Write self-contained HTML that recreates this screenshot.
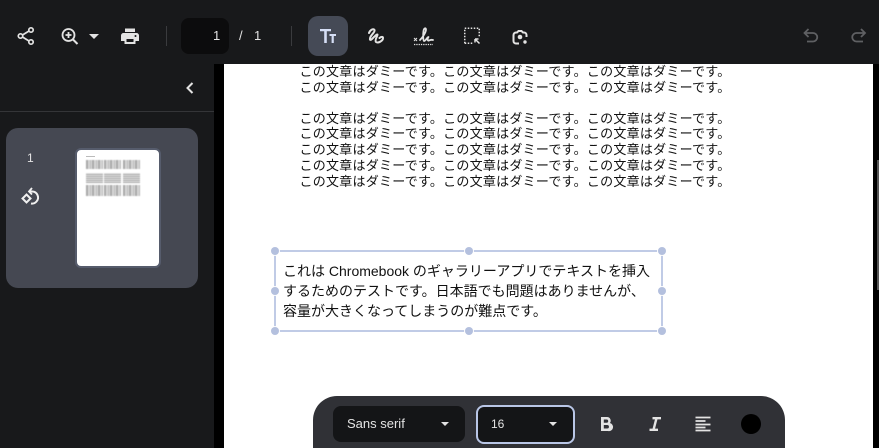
<!DOCTYPE html>
<html><head><meta charset="utf-8"><style>
html,body{margin:0;padding:0;width:879px;height:448px;overflow:hidden;background:#000;font-family:"Liberation Sans","Noto Sans CJK JP",sans-serif}
body{position:relative}
.a{position:absolute}
svg{position:absolute;overflow:visible}
.l{position:absolute;left:299.500px;font:13px/16px "Liberation Sans","Noto Sans CJK JP",sans-serif;letter-spacing:.25px;color:#111;white-space:nowrap;height:16px;filter:blur(.3px)}
.h{position:absolute;width:8px;height:8px;border-radius:50%;background:#b4c0de;box-shadow:0 0 0 1px #fff}
.b{position:absolute;background:#c0cbe6}
.c{position:absolute;width:17px;background-color:#c4c4c4;filter:blur(.4px)}
.v{background-image:repeating-linear-gradient(90deg,#a8a8a8 0 2px,#d8d8d8 2px 4px,#b8b8b8 4px 5px,#e0e0e0 5px 6px)}
.z{background-image:repeating-linear-gradient(0deg,#a8a8a8 0 1px,#e4e4e4 1px 2px)}
</style></head><body>
<div class="a" style="left:0;top:0;width:879px;height:64px;background:#18191b"></div>
<div class="a" style="left:0;top:64px;width:214px;height:384px;background:#18191b"></div>
<div class="a" style="left:0;top:111px;width:214px;height:1px;background:#343538"></div>
<div class="a" style="left:224px;top:64px;width:649px;height:384px;background:#fff"></div>
<div class="a" style="left:877px;top:160px;width:2px;height:130px;background:#555"></div>

<!-- share -->
<svg style="left:14px;top:24px" width="24" height="24" viewBox="0 0 24 24" fill="none" stroke="#e3e3e3" stroke-width="1.7"><circle cx="17" cy="6" r="2.2"/><circle cx="6.5" cy="12" r="2.2"/><circle cx="17" cy="18" r="2.2"/><path d="M8.500 11 15 7M8.500 13 15 17"/></svg>
<!-- zoom -->
<svg style="left:58px;top:24px" width="24" height="24" viewBox="0 0 24 24" fill="none" stroke="#e3e3e3" stroke-width="1.8"><circle cx="10.500" cy="11" r="6"/><path d="M15 15.500 19.500 20" stroke-width="2"/><path d="M10.500 8v6M7.500 11h6"/></svg>
<div class="a" style="left:89px;top:34px;width:0;height:0;border:5px solid transparent;border-top-color:#e3e3e3;border-bottom:0"></div>
<!-- print -->
<svg style="left:118px;top:24px" width="24" height="24" viewBox="0 0 24 24" fill="#e3e3e3"><path d="M7 4.500h10v3.500H7zM5.500 9h13A2.500 2.500 0 0 1 21 11.500V17h-3.500v3h-11v-3H3v-5.500A2.500 2.500 0 0 1 5.500 9zM8.500 15v3h7v-3zM17.500 11a1 1 0 1 0 .01 0z" fill-rule="evenodd"/></svg>

<div class="a" style="left:166px;top:26px;width:1px;height:20px;background:#3a3b3e"></div>
<div class="a" style="left:181px;top:18px;width:48px;height:36px;border-radius:8px;background:#0c0c0d"></div>
<div class="a" style="left:213px;top:28px;font-size:13px;line-height:16px;color:#e3e3e3">1</div>
<div class="a" style="left:239px;top:28px;font-size:13px;line-height:16px;color:#e3e3e3">/</div>
<div class="a" style="left:254px;top:28px;font-size:13px;line-height:16px;color:#e3e3e3">1</div>
<div class="a" style="left:291px;top:26px;width:1px;height:20px;background:#3a3b3e"></div>

<div class="a" style="left:308px;top:16px;width:40px;height:40px;border-radius:10px;background:#454a56"></div>
<!-- Tt -->
<svg style="left:316px;top:24px" width="24" height="24" viewBox="0 0 24 24" fill="#d5def5"><path d="M4 5h11v2.200h-4.200V19H8.200V7.200H4zM13.500 10h6.500v2h-2.200v7h-2.200v-7h-2.100z"/></svg>
<!-- scribble -->
<svg style="left:364px;top:24px" width="24" height="24" viewBox="0 0 24 24" fill="none" stroke="#e3e3e3" stroke-width="2" stroke-linecap="round" stroke-linejoin="round"><path d="M5 9C6 6 9.500 4 10.500 6 11.500 8.500 5 12 6 15.500 7 17.500 10.500 11.500 13 10.500 15 10 10 16 12 18 14 19.500 19 17 19 14 19 12.500 17 12.500 15.500 14"/></svg>
<!-- signature -->
<svg style="left:412px;top:24px" width="24" height="24" viewBox="0 0 24 24" fill="none" stroke="#e3e3e3"><path d="M2 14 5 17M5 14 2 17" stroke-width="1"/><path d="M8 16C11 13 14 8 14 5.500 14 3.500 12 4 11.500 7 11 10 11 16 12 17 13.500 17.500 15 13 16.500 13 15 15 15.500 17 17 16.500 18 16 19.500 15.500 21 16" stroke-width="1.800" stroke-linecap="round" stroke-linejoin="round"/><path d="M2 20.500H21" stroke-width="1.300" stroke-dasharray="1.300 1"/></svg>
<!-- selection -->
<svg style="left:460px;top:24px" width="24" height="24" viewBox="0 0 24 24" fill="none" stroke="#e3e3e3" stroke-width="1.500"><path d="M4.750 19.250v-15h14.500v8M4.750 19.250H12.500" stroke-dasharray="1.500 1.500"/><path d="M15 15 19.500 19.500M15 15h3.500M15 15v3.500" stroke-width="1.500"/></svg>
<!-- camera -->
<svg style="left:508px;top:24px" width="24" height="24" viewBox="0 0 24 24" fill="none" stroke="#e3e3e3" stroke-width="2"><path d="M11 19.500H8a2.500 2.500 0 0 1-2.500-2.500v-6A2.500 2.500 0 0 1 8 8.500h1L10.500 7h3L15 8.500h1a2.500 2.500 0 0 1 2.500 2.500v2"/><circle cx="12" cy="13" r="2.300" fill="#e3e3e3" stroke="none"/><circle cx="17" cy="18" r="1.700" fill="#e3e3e3" stroke="none"/></svg>
<!-- undo redo -->
<svg style="left:799px;top:24px" width="24" height="24" viewBox="0 0 24 24" fill="none" stroke="#5f6063" stroke-width="1.800"><path d="M9.500 5 5.500 9l4 4M5.500 9H14a4.200 4.200 0 0 1 0 8.500H8"/></svg>
<svg style="left:846px;top:24px" width="24" height="24" viewBox="0 0 24 24" fill="none" stroke="#5f6063" stroke-width="1.800"><path d="M15 5l4 4-4 4M19 9h-8.500a4.200 4.200 0 0 0 0 8.500H17"/></svg>

<!-- chevron -->
<svg style="left:178px;top:76px" width="24" height="24" viewBox="0 0 24 24" fill="none" stroke="#e3e3e3" stroke-width="2"><path d="M14.500 7 9.500 12l5 5"/></svg>

<!-- thumb panel -->
<div class="a" style="left:6px;top:128px;width:192px;height:160px;border-radius:12px;background:#454852"></div>
<div class="a" style="left:27px;top:150px;font-size:12px;line-height:16px;color:#e3e3e3">1</div>
<svg style="left:18px;top:185px" width="24" height="24" viewBox="0 0 24 24" fill="none" stroke="#f0f0f0" stroke-width="2"><path d="M8.500 9.500 12.500 13.500 8.500 17.500 4.500 13.500z"/><path d="M12 6.500h2a6 6 0 0 1 4.500 10 6 6 0 0 1-5.500 2"/><path d="M14 3 11 6.500 14 9.500" stroke-width="1.800"/></svg>
<div class="a" style="left:75px;top:148px;width:82px;height:116px;border:2px solid #565c6c;border-radius:6px;background:#fff;overflow:hidden">
 <div class="a" style="left:9px;top:6px;width:9px;height:1px;background:#bbb"></div>
 <div class="c v" style="left:9px;top:10px;height:9px"></div><div class="c v" style="left:27px;top:10px;height:9px"></div><div class="c v" style="left:46px;top:10px;height:9px"></div>
 <div class="c z" style="left:9px;top:23px;height:10px"></div><div class="c z" style="left:27px;top:23px;height:10px"></div><div class="c z" style="left:46px;top:23px;height:10px"></div>
 <div class="c v" style="left:9px;top:35px;height:11px"></div><div class="c v" style="left:27px;top:35px;height:11px"></div><div class="c v" style="left:46px;top:35px;height:11px"></div>
</div>

<!-- doc lines -->
<div class="l" style="top:64px">この文章はダミーです。この文章はダミーです。この文章はダミーです。</div>
<div class="l" style="top:80px">この文章はダミーです。この文章はダミーです。この文章はダミーです。</div>
<div class="l" style="top:111px">この文章はダミーです。この文章はダミーです。この文章はダミーです。</div>
<div class="l" style="top:126px">この文章はダミーです。この文章はダミーです。この文章はダミーです。</div>
<div class="l" style="top:142px">この文章はダミーです。この文章はダミーです。この文章はダミーです。</div>
<div class="l" style="top:158px">この文章はダミーです。この文章はダミーです。この文章はダミーです。</div>
<div class="l" style="top:174px">この文章はダミーです。この文章はダミーです。この文章はダミーです。</div>

<!-- text box -->
<div class="b" style="left:275px;top:250px;width:387px;height:2px"></div>
<div class="b" style="left:275px;top:330px;width:387px;height:2px"></div>
<div class="b" style="left:274px;top:251px;width:2px;height:80px"></div>
<div class="b" style="left:661px;top:251px;width:2px;height:80px"></div>
<div class="h" style="left:271px;top:247px"></div><div class="h" style="left:465px;top:247px"></div><div class="h" style="left:658px;top:247px"></div>
<div class="h" style="left:271px;top:287px"></div><div class="h" style="left:658px;top:287px"></div>
<div class="h" style="left:271px;top:327px"></div><div class="h" style="left:465px;top:327px"></div><div class="h" style="left:658px;top:327px"></div>
<div class="a" style="left:283px;top:261px;font:14px/20px 'Liberation Sans','Noto Sans CJK JP',sans-serif;color:#111;white-space:nowrap">これは Chromebook のギャラリーアプリでテキストを挿入<br>するためのテストです。日本語でも問題はありませんが、<br>容量が大きくなってしまうのが難点です。</div>

<!-- bottom toolbar -->
<div class="a" style="left:313px;top:396px;width:472px;height:52px;border-radius:24px 24px 0 0;background:#303136"></div>
<div class="a" style="left:333px;top:406px;width:132px;height:36px;border-radius:8px;background:#141517"></div>
<div class="a" style="left:347px;top:416px;font-size:13px;line-height:16px;color:#e3e3e3">Sans serif</div>
<div class="a" style="left:441px;top:422px;width:0;height:0;border:4px solid transparent;border-top-color:#e3e3e3;border-bottom:0"></div>
<div class="a" style="left:476px;top:405px;width:95px;height:35px;border-radius:8px;background:#141517;border:2px solid #b9c6e6"></div>
<div class="a" style="left:491px;top:416px;font-size:12px;line-height:16px;color:#e3e3e3">16</div>
<div class="a" style="left:549px;top:422px;width:0;height:0;border:4px solid transparent;border-top-color:#e3e3e3;border-bottom:0"></div>
<svg style="left:594px;top:412px" width="24" height="24" viewBox="0 0 24 24" fill="#e3e3e3"><path fill-rule="evenodd" d="M7 5h6a3.700 3.700 0 0 1 2.900 6A3.900 3.900 0 0 1 14 19H7zM9.800 7.500v3.200h2.800a1.600 1.600 0 0 0 0-3.200zM9.800 13v3.500h3.400a1.750 1.750 0 0 0 0-3.500z"/></svg>
<svg style="left:643px;top:412px" width="24" height="24" viewBox="0 0 24 24" fill="none" stroke="#e3e3e3" stroke-width="2.400"><path d="M9.500 6.200H18M6.500 17.800H15M13.500 6.200 10.500 17.800"/></svg>
<svg style="left:691px;top:412px" width="24" height="24" viewBox="0 0 24 24" fill="none" stroke="#e3e3e3" stroke-width="1.800"><path d="M4.500 5.500h15M4.500 9h10M4.500 12.500h15M4.500 15.500h10M4.500 18.500h15"/></svg>
<div class="a" style="left:741px;top:414px;width:20px;height:20px;border-radius:50%;background:#000"></div>
</body></html>
